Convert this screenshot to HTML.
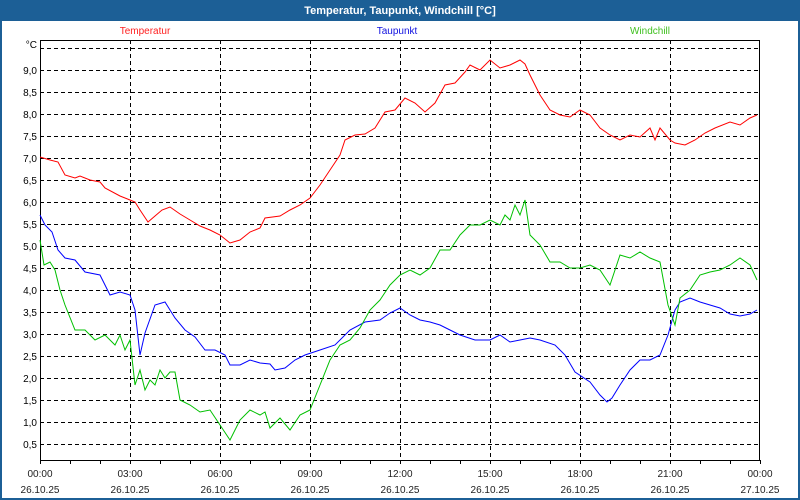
<!DOCTYPE html>
<html><head><style>
html,body{margin:0;padding:0;width:800px;height:500px;overflow:hidden;background:#fff}
svg{display:block}
text{font-family:"Liberation Sans",sans-serif}
</style></head><body>
<svg width="800" height="500" xmlns="http://www.w3.org/2000/svg">
<rect x="0" y="0" width="800" height="500" fill="#1c5f96"/>
<rect x="2" y="21" width="796" height="477" fill="#fff"/>
<text x="400" y="14" font-size="11" font-weight="bold" fill="#fff" text-anchor="middle">Temperatur, Taupunkt, Windchill [°C]</text>
<text x="145" y="34" font-size="10" fill="#ff2020" text-anchor="middle">Temperatur</text>
<text x="397" y="34" font-size="10" fill="#1010e0" text-anchor="middle">Taupunkt</text>
<text x="650" y="34" font-size="10" fill="#40c020" text-anchor="middle">Windchill</text>
<g stroke="#000" stroke-width="1" stroke-dasharray="4,3" fill="none">
<path d="M40 48.5H760M40 70.5H760M40 92.5H760M40 114.5H760M40 136.5H760M40 158.5H760M40 180.5H760M40 202.5H760M40 224.5H760M40 246.5H760M40 268.5H760M40 290.5H760M40 312.5H760M40 334.5H760M40 356.5H760M40 378.5H760M40 400.5H760M40 422.5H760M40 444.5H760"/>
<path d="M130.5 40V460M220.5 40V460M310.5 40V460M400.5 40V460M490.5 40V460M580.5 40V460M670.5 40V460"/>
</g>
<rect x="40.5" y="40.5" width="719" height="420" fill="none" stroke="#000"/>
<g stroke="#000"><path d="M40.5 460v4M70.5 460v4M100.5 460v4M130.5 460v4M160.5 460v4M190.5 460v4M220.5 460v4M250.5 460v4M280.5 460v4M310.5 460v4M340.5 460v4M370.5 460v4M400.5 460v4M430.5 460v4M460.5 460v4M490.5 460v4M520.5 460v4M550.5 460v4M580.5 460v4M610.5 460v4M640.5 460v4M670.5 460v4M700.5 460v4M730.5 460v4M760.5 460v4"/></g>
<g font-size="10" fill="#000" text-anchor="end">
<text x="37" y="48">°C</text><text x="37" y="74">9,0</text><text x="37" y="96">8,5</text><text x="37" y="118">8,0</text><text x="37" y="140">7,5</text><text x="37" y="162">7,0</text><text x="37" y="184">6,5</text><text x="37" y="206">6,0</text><text x="37" y="228">5,5</text><text x="37" y="250">5,0</text><text x="37" y="272">4,5</text><text x="37" y="294">4,0</text><text x="37" y="316">3,5</text><text x="37" y="338">3,0</text><text x="37" y="360">2,5</text><text x="37" y="382">2,0</text><text x="37" y="404">1,5</text><text x="37" y="426">1,0</text><text x="37" y="448">0,5</text>
</g>
<g font-size="10" fill="#222" text-anchor="middle">
<text x="40" y="477">00:00</text><text x="130" y="477">03:00</text><text x="220" y="477">06:00</text><text x="310" y="477">09:00</text><text x="400" y="477">12:00</text><text x="490" y="477">15:00</text><text x="580" y="477">18:00</text><text x="670" y="477">21:00</text><text x="760" y="477">00:00</text>
<text x="40" y="493">26.10.25</text><text x="130" y="493">26.10.25</text><text x="220" y="493">26.10.25</text><text x="310" y="493">26.10.25</text><text x="400" y="493">26.10.25</text><text x="490" y="493">26.10.25</text><text x="580" y="493">26.10.25</text><text x="670" y="493">26.10.25</text><text x="760" y="493">27.10.25</text>
</g>
<g fill="none" stroke-width="1">
<polyline stroke="#ff0000" points="40,157 50,160 58,162 65,175 75,178 80,176 90,180 100,182 105,188 120,196 130,200 135,202 140,210 148,222 155,216 162,210 170,207 180,214 190,220 200,226 210,230 220,235 230,243 240,240 250,232 260,228 265,218 280,216 290,210 300,205 310,198 320,185 330,170 340,155 345,140 355,135 365,134 375,128 385,112 395,110 405,98 415,103 425,112 435,103 445,85 455,83 465,72 470,65 480,70 490,60 500,68 510,65 520,60 525,64 530,75 540,95 550,110 560,115 570,117 580,110 590,115 600,128 610,135 620,140 630,135 640,137 650,128 655,140 660,128 670,140 675,143 685,145 695,140 705,133 715,128 730,122 740,125 750,118 757,115"/>
<polyline stroke="#0000ff" points="40,215 45,225 52,232 58,250 65,258 75,260 85,272 100,275 110,295 120,292 130,295 135,310 140,355 145,333 155,305 165,302 175,318 185,330 195,337 205,350 215,350 225,355 230,365 240,365 250,360 260,363 270,364 275,370 285,368 295,360 305,355 320,350 335,345 350,330 365,322 380,320 390,313 400,308 410,315 420,320 430,322 440,325 450,330 460,335 475,340 490,340 500,335 510,342 520,340 530,338 540,340 555,345 565,355 575,372 590,382 600,395 607,402 612,398 620,385 630,370 640,360 650,360 660,355 668,335 675,310 680,302 690,298 700,302 710,305 720,308 730,314 740,316 750,314 757,310"/>
<polyline stroke="#00c000" points="40,240 44,265 50,262 55,270 60,290 65,305 75,330 85,330 95,340 105,335 115,345 120,335 125,350 130,340 135,385 140,370 145,390 150,380 155,385 160,370 165,378 170,372 175,372 180,400 190,405 200,412 210,410 220,425 230,440 240,420 250,410 260,415 265,412 270,428 280,418 290,430 300,415 310,410 320,385 330,360 340,345 350,340 360,328 370,310 380,300 390,285 400,275 410,270 420,275 430,268 440,250 450,250 460,235 470,225 480,225 490,220 500,225 505,215 510,220 515,205 520,215 525,200 530,235 540,245 550,262 560,262 570,268 580,268 590,265 600,270 610,285 620,255 630,258 640,252 650,258 660,262 668,305 675,325 680,298 690,290 700,275 710,272 720,270 730,265 740,258 750,265 757,280"/>
</g>
</svg>
</body></html>
